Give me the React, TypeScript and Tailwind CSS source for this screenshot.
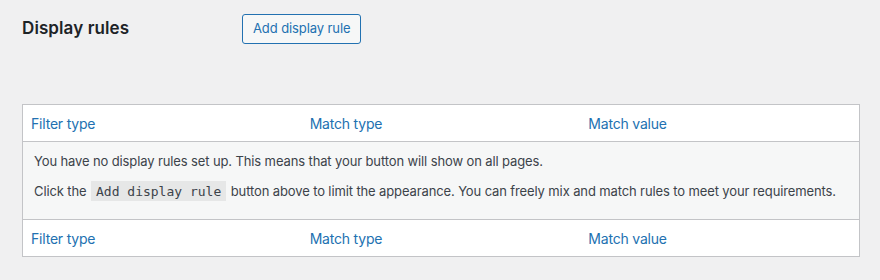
const columns = ["Filter type", "Match type", "Match value"];

const HeaderRow = ({ position }: { position: "top" | "bottom" }) => (
  <div
    className={`grid grid-cols-3 h-[37px] bg-white border-[#c3c4c7] ${
      position === "top" ? "border-b" : "border-t"
    }`}
  >
    {columns.map((label) => (
      <div
        key={label}
        className="flex items-center px-[8px] text-[14px] tracking-[-0.2px] text-[#2271b1]"
      >
        {label}
      </div>
    ))}
  </div>
);

export default function App() {
  return (
    <div
      className="w-[880px] h-[280px] bg-[#f0f0f1] pl-[22px] pr-[20px] pt-[14px] text-[#3c434a]"
      style={{ fontFamily: "Inter, 'Noto Sans', sans-serif" }}
    >
      <div className="flex items-center">
        <h2 className="w-[220px] text-[17px] font-semibold tracking-[0.1px] text-[#1d2327]">
          Display rules
        </h2>
        <button className="h-[30px] px-[10px] rounded-[3px] border border-[#2271b1] bg-[#f6f7f7] text-[13px] tracking-[-0.1px] text-[#2271b1]">
          Add display rule
        </button>
      </div>

      <div className="mt-[60px] border border-[#c3c4c7]">
        <HeaderRow position="top" />
        <div className="h-[77px] bg-[#f6f7f7] px-[11px] pt-[10px] text-[13px] leading-[19.5px] tracking-[-0.12px] whitespace-nowrap">
          <p>
            You have no display rules set up. This means that your button will
            show on all pages.
          </p>
          <p className="mt-[10px]">
            Click the{" "}
            <code
              className="bg-[#e6e7e7] px-[5px] pt-[3px] pb-[2px] mx-[1px] text-[13px] tracking-normal"
              style={{ fontFamily: "'DejaVu Sans Mono', monospace" }}
            >
              Add display rule
            </code>{" "}
            button above to limit the appearance. You can freely mix and match
            rules to meet your requirements.
          </p>
        </div>
        <HeaderRow position="bottom" />
      </div>
    </div>
  );
}
